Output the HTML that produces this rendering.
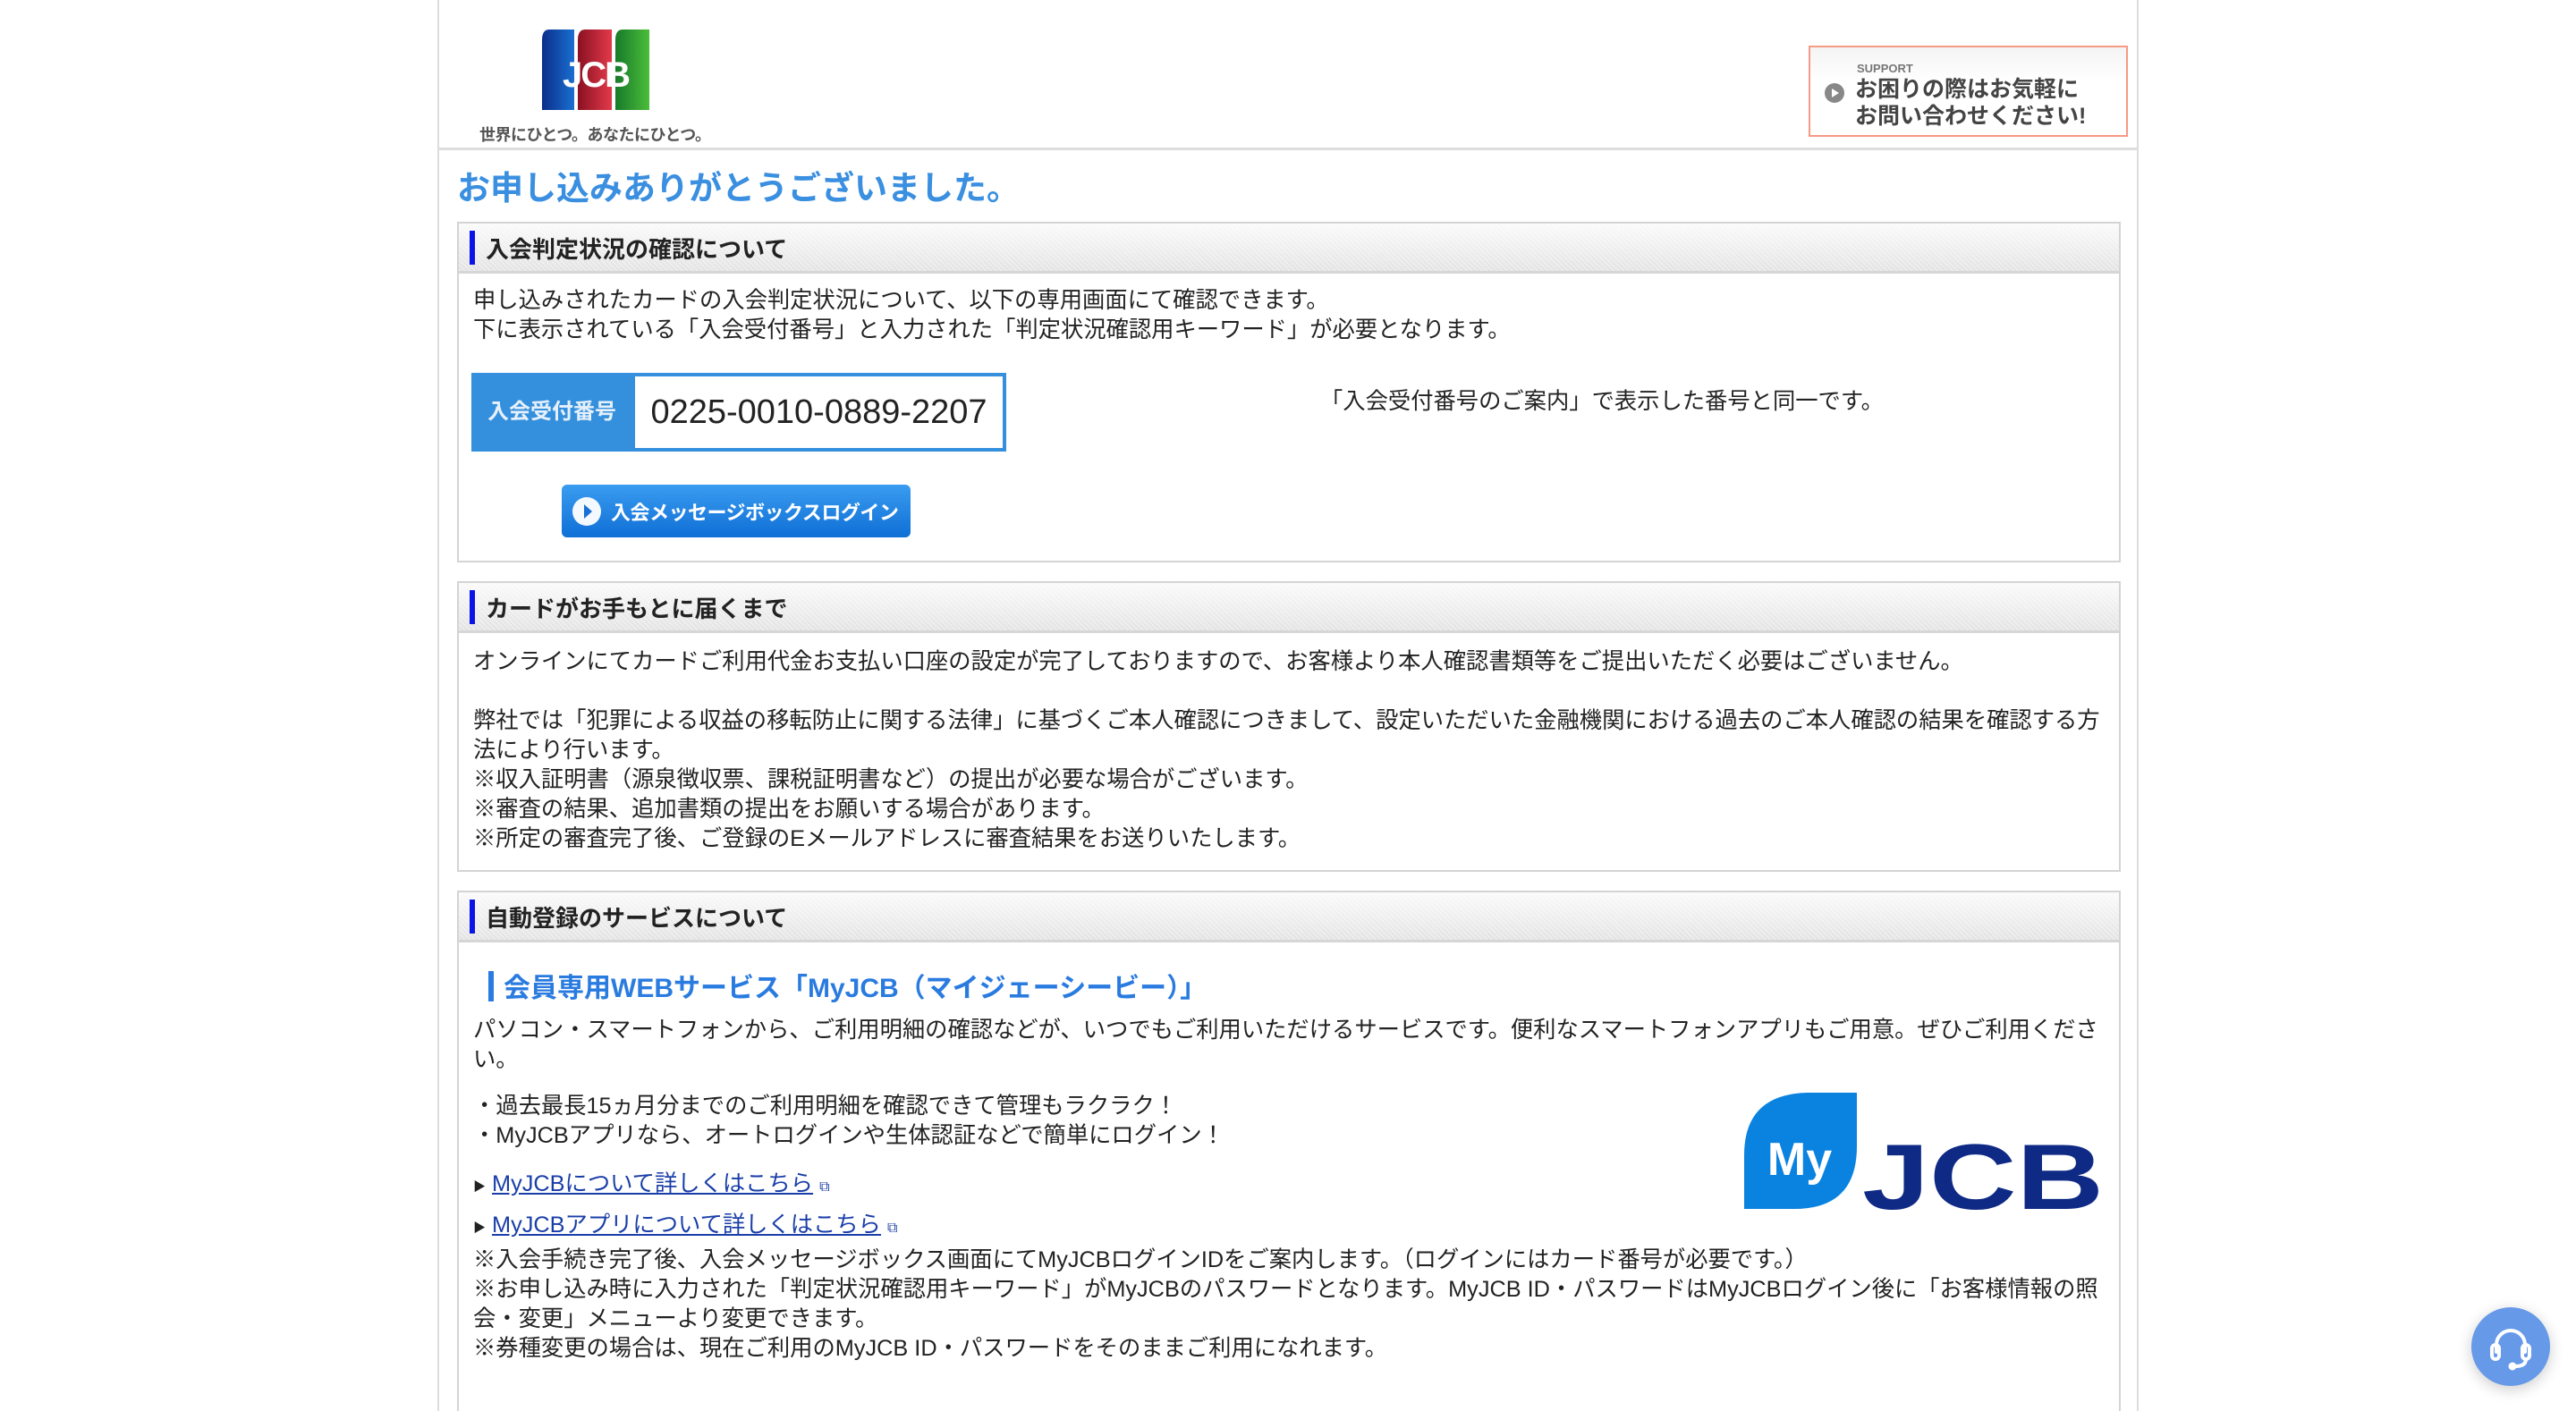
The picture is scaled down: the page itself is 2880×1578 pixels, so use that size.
<!DOCTYPE html>
<html><head><meta charset="utf-8"><style>
*{margin:0;padding:0;box-sizing:border-box}
html,body{width:2880px;height:1578px;overflow:hidden}
body{background:#fff;font-family:"Liberation Sans","Noto Sans CJK JP",sans-serif;color:#333;position:relative}
.wrap{position:absolute;left:489px;top:0;width:1902px;height:1578px;border-left:2px solid #ddd;border-right:2px solid #ddd}
.hline{position:absolute;left:489px;width:1902px;top:165px;height:3px;background:#ddd}
.abs{position:absolute}
.box{position:absolute;left:511px;width:1860px;border:2px solid #d4d4d4;background:#fff}
.bh{height:56px;background:repeating-linear-gradient(45deg,rgba(255,255,255,.35) 0 2px,rgba(0,0,0,0) 2px 4px),linear-gradient(#fafafa,#e2e2e2);border-bottom:3px solid #d6d6d6;position:relative}
.bh i{position:absolute;left:12px;top:8px;width:6px;height:38px;background:#0a14e6}
.bh b{position:absolute;left:30px;top:9px;font-size:26px;color:#222}
.t{position:absolute;left:529px;font-size:25.3px;line-height:33px;color:#222;white-space:nowrap}
a{color:#1a3ea8}
</style></head><body>
<div class="wrap"></div>
<div class="hline"></div>
<svg class="abs" style="left:604px;top:31px" width="124" height="94" viewBox="0 0 124 94">
<defs><linearGradient id="b" x1="0" x2="1"><stop offset="0" stop-color="#0a2e8a"/><stop offset="1" stop-color="#1a6fd0"/></linearGradient>
<linearGradient id="r" x1="0" x2="1"><stop offset="0" stop-color="#8a1022"/><stop offset="1" stop-color="#e23a4a"/></linearGradient>
<linearGradient id="g" x1="0" x2="1"><stop offset="0" stop-color="#177a2a"/><stop offset="1" stop-color="#4bbd3a"/></linearGradient></defs>
<path d="M10 2h28v90H2V14Q2 2 10 2z" fill="url(#b)"/><path d="M50 2h30v90H42V14Q42 2 50 2z" fill="url(#r)"/><path d="M92 2h30v90H84V14Q84 2 92 2z" fill="url(#g)"/>
<text x="62" y="66" text-anchor="middle" font-family="Liberation Sans" font-weight="bold" font-size="40" fill="#fff" letter-spacing="-2">JCB</text></svg>
<div class="abs" style="left:536px;top:137px;font-size:18px;font-weight:bold;color:#555;white-space:nowrap;letter-spacing:-0.5px">世界にひとつ。あなたにひとつ。</div>
<div class="abs" style="left:2022px;top:51px;width:357px;height:102px;border:2px solid #f59a85;background:linear-gradient(#f4f4f4,#fff 40%)">
<div class="abs" style="left:52px;top:16px;font-size:13px;font-weight:bold;color:#777">SUPPORT</div>
<div class="abs" style="left:16px;top:40px;width:22px;height:22px;border-radius:50%;background:#888"></div>
<div class="abs" style="left:24px;top:46px;border-left:8px solid #fff;border-top:5px solid transparent;border-bottom:5px solid transparent"></div>
<div class="abs" style="left:50px;top:32px;font-size:25px;line-height:30px;font-weight:bold;color:#444;white-space:nowrap">お困りの際はお気軽に<br>お問い合わせください!</div></div>
<div class="abs" style="left:511px;top:180px;font-size:37px;font-weight:bold;color:#3a8fe0;white-space:nowrap">お申し込みありがとうございました。</div>
<div class="box" style="top:248px;height:381px"><div class="bh"><i></i><b>入会判定状況の確認について</b></div></div>
<div class="t" style="top:320px">申し込みされたカードの入会判定状況について、以下の専用画面にて確認できます。<br>下に表示されている「入会受付番号」と入力された「判定状況確認用キーワード」が必要となります。</div>
<div class="abs" style="left:527px;top:417px;width:598px;height:88px;background:#3490dc">
<div class="abs" style="left:0;top:0;width:180px;height:88px;line-height:88px;text-align:center;font-size:24px;font-weight:bold;color:#e6f0fb">入会受付番号</div>
<div class="abs" style="left:183px;top:4px;width:411px;height:80px;background:#fff;line-height:80px;text-align:center;font-size:38px;color:#222">0225-0010-0889-2207</div></div>
<div class="t" style="left:1476px;top:433px">「入会受付番号のご案内」で表示した番号と同一です。</div>
<div class="abs" style="left:628px;top:542px;width:390px;height:59px;border-radius:6px;background:linear-gradient(#3a9cf0,#0f6fd6)">
<div class="abs" style="left:12px;top:14px;width:32px;height:32px;border-radius:50%;background:#f4f8ff"></div>
<div class="abs" style="left:25px;top:22px;border-left:9px solid #1670d6;border-top:8px solid transparent;border-bottom:8px solid transparent"></div>
<div class="abs" style="left:55px;top:14px;font-size:22px;font-weight:bold;color:#fff;white-space:nowrap;letter-spacing:-0.5px">入会メッセージボックスログイン</div></div>
<div class="box" style="top:650px;height:325px"><div class="bh"><i></i><b>カードがお手もとに届くまで</b></div></div>
<div class="t" style="top:724px">オンラインにてカードご利用代金お支払い口座の設定が完了しておりますので、お客様より本人確認書類等をご提出いただく必要はございません。</div>
<div class="t" style="top:790px;white-space:normal;width:1836px">弊社では「犯罪による収益の移転防止に関する法律」に基づくご本人確認につきまして、設定いただいた金融機関における過去のご本人確認の結果を確認する方法により行います。<br>※収入証明書（源泉徴収票、課税証明書など）の提出が必要な場合がございます。<br>※審査の結果、追加書類の提出をお願いする場合があります。<br>※所定の審査完了後、ご登録のEメールアドレスに審査結果をお送りいたします。</div>
<div class="box" style="top:996px;height:620px"><div class="bh"><i></i><b>自動登録のサービスについて</b></div></div>
<div class="abs" style="left:546px;top:1086px;width:6px;height:34px;background:#2a7be0"></div>
<div class="abs" style="left:563px;top:1080px;font-size:30px;font-weight:bold;color:#2a7be0;white-space:nowrap">会員専用WEBサービス「MyJCB（マイジェーシービー）」</div>
<div class="t" style="top:1136px;white-space:normal;width:1836px">パソコン・スマートフォンから、ご利用明細の確認などが、いつでもご利用いただけるサービスです。便利なスマートフォンアプリもご用意。ぜひご利用ください。</div>
<div class="t" style="top:1221px">・過去最長15ヵ月分までのご利用明細を確認できて管理もラクラク！<br>・MyJCBアプリなら、オートログインや生体認証などで簡単にログイン！</div>
<div class="t" style="top:1303px;line-height:42px"><span style="font-size:14px">▶</span> <a href="#">MyJCBについて詳しくはこちら</a> <span style="font-size:16px;color:#1a3ea8">⧉</span><br><span style="font-size:14px">▶</span> <a href="#">MyJCBアプリについて詳しくはこちら</a> <span style="font-size:16px;color:#1a3ea8">⧉</span></div>
<div class="t" style="top:1393px;white-space:normal;width:1836px">※入会手続き完了後、入会メッセージボックス画面にてMyJCBログインIDをご案内します。（ログインにはカード番号が必要です。）<br>※お申し込み時に入力された「判定状況確認用キーワード」がMyJCBのパスワードとなります。MyJCB ID・パスワードはMyJCBログイン後に「お客様情報の照会・変更」メニューより変更できます。<br>※券種変更の場合は、現在ご利用のMyJCB ID・パスワードをそのままご利用になれます。</div>
<svg class="abs" style="left:1950px;top:1222px" width="404" height="134" viewBox="0 0 404 134">
<path d="M0 130V70Q0 2 70 0H126V60Q126 130 56 130Z" fill="#0a82e0"/>
<text x="62" y="92" text-anchor="middle" font-family="Liberation Sans" font-weight="bold" font-size="52" fill="#fff">My</text>
<text x="132" y="130" font-family="Liberation Sans" font-weight="bold" font-size="104" fill="#0f2a85" textLength="270" lengthAdjust="spacingAndGlyphs">JCB</text></svg>
<div class="abs" style="left:2763px;top:1462px;width:88px;height:88px;border-radius:50%;background:#6699e8;box-shadow:0 4px 16px rgba(0,0,0,.2)">
<svg width="88" height="88" viewBox="0 0 88 88" fill="none" stroke="#fff" stroke-width="4" stroke-linecap="round"><path d="M28 50V42a16 16 0 0 1 32 0v8"/><rect x="23" y="42" width="8" height="16" rx="4"/><rect x="57" y="42" width="8" height="16" rx="4"/><path d="M61 58q0 8-12 8"/><circle cx="46" cy="66" r="2.5" fill="#fff"/></svg></div>
</body></html>
